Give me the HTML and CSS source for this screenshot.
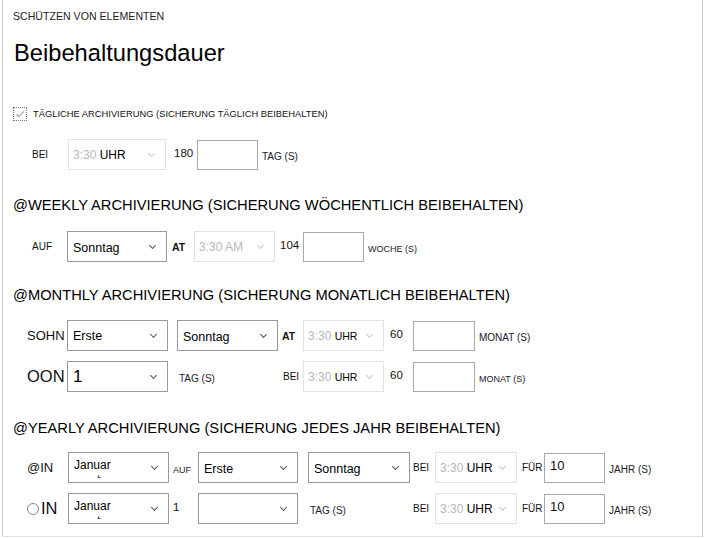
FILE: index.html
```html
<!DOCTYPE html>
<html lang="de">
<head>
<meta charset="utf-8">
<title>Beibehaltungsdauer</title>
<link rel="stylesheet" href="styles.css">
</head>
<body>
<div class="frame">
  <div class="crumb">SCHÜTZEN VON ELEMENTEN</div>
  <h1 class="title">Beibehaltungsdauer</h1>

  <div class="check-row">
    <span class="checkbox"><svg viewBox="0 0 12 12" width="12" height="12"><path d="M2.5 6.2 L5 8.6 L9.8 3.4" fill="none" stroke="#a8a8a8" stroke-width="1.2"/></svg></span>
    <span class="check-label">TÄGLICHE ARCHIVIERUNG (SICHERUNG TÄGLICH BEIBEHALTEN)</span>
  </div>

  <div class="row daily">
    <span class="lbl sm c-bei">BEI</span>
    <div class="sel dis w98"><span class="v"><span class="g">3:30</span> UHR</span><i class="chev"></i></div>
    <span class="num c-180">180</span>
    <div class="inp w61"></div>
    <span class="unit ml4">TAG (S)</span>
  </div>

  <h2 class="section s-weekly">@WEEKLY ARCHIVIERUNG (SICHERUNG WÖCHENTLICH BEIBEHALTEN)</h2>
  <div class="row weekly">
    <span class="lbl sm c-auf">AUF</span>
    <div class="sel w100"><span class="v low">Sonntag</span><i class="chev"></i></div>
    <span class="lbl bold c-at">AT</span>
    <div class="sel dis w81"><span class="v g">3:30 AM</span><i class="chev"></i></div>
    <span class="num c-104">104</span>
    <div class="inp w61"></div>
    <span class="unit tiny ml4">WOCHE (S)</span>
  </div>

  <h2 class="section s-monthly">@MONTHLY ARCHIVIERUNG (SICHERUNG MONATLICH BEIBEHALTEN)</h2>
  <div class="grid monthly">
    <span class="lbl md">SOHN</span>
    <div class="sel w101"><span class="v">Erste</span><i class="chev"></i></div>
    <span></span>
    <div class="sel w101"><span class="v low">Sonntag</span><i class="chev"></i></div>
    <span class="lbl bold pad4">AT</span>
    <div class="sel dis w81"><span class="v"><span class="g">3:30</span> <span class="sm-in">UHR</span></span><i class="chev"></i></div>
    <span class="num pad6">60</span>
    <div class="inp w62"></div>
    <span class="unit pad4">MONAT (S)</span>

    <span class="lbl lg">OON</span>
    <div class="sel w101"><span class="v big">1</span><i class="chev"></i></div>
    <span></span>
    <span class="unit pad2">TAG (S)</span>
    <span class="lbl sm pad5">BEI</span>
    <div class="sel dis w81"><span class="v"><span class="g">3:30</span> <span class="sm-in">UHR</span></span><i class="chev"></i></div>
    <span class="num pad6">60</span>
    <div class="inp w62"></div>
    <span class="unit tiny pad4">MONAT (S)</span>
  </div>

  <h2 class="section s-yearly">@YEARLY ARCHIVIERUNG (SICHERUNG JEDES JAHR BEIBEHALTEN)</h2>
  <div class="grid yearly">
    <span class="lbl md">@IN</span>
    <div class="sel w101"><span class="v top sm12">Januar<i class="tick"></i></span><i class="chev"></i></div>
    <span class="unit tiny pad4">AUF</span>
    <div class="sel w100"><span class="v low">Erste</span><i class="chev"></i></div>
    <div class="cell-pad10"><div class="sel w102"><span class="v low">Sonntag</span><i class="chev"></i></div></div>
    <span class="lbl sm">BEI</span>
    <div class="sel dis w82"><span class="v"><span class="g">3:30</span> UHR</span><i class="chev"></i></div>
    <span class="lbl sm pad5">FÜR</span>
    <div class="inp w61"><span class="val">10</span></div>
    <span class="unit pad4">JAHR (S)</span>

    <span class="lbl radio-lbl"><span class="radio"></span><span class="lg">IN</span></span>
    <div class="sel w101"><span class="v top sm12">Januar<i class="tick"></i></span><i class="chev"></i></div>
    <span class="num pad4">1</span>
    <div class="sel w100"><span class="v"></span><i class="chev"></i></div>
    <span class="unit pad12">TAG (S)</span>
    <span class="lbl sm">BEI</span>
    <div class="sel dis w82"><span class="v"><span class="g">3:30</span> UHR</span><i class="chev"></i></div>
    <span class="lbl sm pad5">FÜR</span>
    <div class="inp w61"><span class="val">10</span></div>
    <span class="unit pad4">JAHR (S)</span>
  </div>
</div>
</body>
</html>
```

FILE: styles.css
```css
* { box-sizing: border-box; }
html, body { margin: 0; padding: 0; background: #fff; }
body {
  font-family: "Liberation Sans", Arial, sans-serif;
  color: #111;
}
.frame {
  margin-left: 2px;
  width: 701px;
  height: 537px;
  border-left: 1px solid #c8c8c8;
  border-right: 1px solid #c8c8c8;
  border-bottom: 1px solid #e0e0e0;
  padding: 8px 0 0 10px;
  display: flex;
  flex-direction: column;
  align-items: flex-start;
}
.crumb {
  font-size: 10.6px;
  line-height: 16px;
  color: #222;
}
.title {
  margin: 15px 0 0 1px;
  font-size: 23.7px;
  line-height: 29px;
  font-weight: normal;
  color: #000;
}
.check-row {
  margin-top: 39px;
  display: flex;
  align-items: center;
  height: 14px;
}
.checkbox {
  width: 14px;
  height: 14px;
  border: 1px dotted #777;
  display: flex;
  align-items: center;
  justify-content: center;
}
.check-label {
  margin-left: 6px;
  font-size: 9.35px;
  color: #111;
}
.row {
  display: flex;
  align-items: center;
  height: 31px;
}
.daily { margin-top: 18px; padding-left: 19px; }
.weekly { margin-top: 17px; padding-left: 19px; }
.section {
  margin: 0;
  font-size: 14.7px;
  line-height: 18px;
  font-weight: normal;
  color: #000;
}
.s-weekly { margin-top: 26px; }
.s-monthly { margin-top: 24px; }
.s-yearly { margin-top: 27px; }

.grid {
  display: grid;
  align-items: center;
  padding-left: 14px;
}
.monthly {
  margin-top: 16px;
  grid-template-columns: 40px 101px 9px 101px 25px 81px 29px 62px auto;
  grid-auto-rows: 31px;
  row-gap: 10px;
}
.yearly {
  margin-top: 15px;
  grid-template-columns: 41px 101px 29px 100px 115px 22px 82px 27px 61px auto;
  grid-auto-rows: 31px;
  row-gap: 10px;
}

.lbl { white-space: nowrap; }
.sm { font-size: 10px; }
.md { font-size: 13px; }
.lg { font-size: 16.5px; }
.bold { font-size: 10.5px; font-weight: bold; }
.num { font-size: 11.5px; margin-top: -4px; }
.unit { font-size: 10px; margin-top: 4px; white-space: nowrap; color: #1a1a2a; }
.unit.tiny { font-size: 9px; }
.ml4 { margin-left: 4px; }

.c-bei { width: 36px; }
.c-auf { width: 35px; }
.c-at { width: 27px; padding-left: 5px; }
.c-180 { width: 31px; padding-left: 8px; }
.c-104 { width: 28px; padding-left: 5px; }
.pad2 { padding-left: 2px; }
.pad4 { padding-left: 4px; }
.pad5 { padding-left: 5px; }
.pad6 { padding-left: 6px; }
.pad12 { padding-left: 12px; }
.cell-pad10 { padding-left: 10px; }

.sel {
  position: relative;
  height: 31px;
  border: 1px solid #9a9a9a;
  background: #fff;
  display: flex;
  align-items: center;
  padding-left: 5px;
  font-size: 12.5px;
  color: #000;
}
.sel.dis { border-color: #e2e2e2; padding-left: 4px; font-size: 12px; }
.w98 { width: 98px; }
.w100 { width: 100px; }
.w101 { width: 101px; }
.w102 { width: 102px; }
.w81 { width: 81px; }
.w82 { width: 82px; }
.w61 { width: 61px; }
.w62 { width: 62px; }
.v { white-space: nowrap; position: relative; }
.v.low { margin-top: 3px; }
.v.top { margin-top: -6px; }
.v.big { font-size: 17px; }
.sm12 { font-size: 12px; }
.g { color: #b8b8b8; }
.sm-in { font-size: 10.5px; }
.chev {
  position: absolute;
  right: 11px;
  top: 11px;
  width: 5px;
  height: 5px;
  border-right: 1.2px solid #555;
  border-bottom: 1.2px solid #555;
  transform: rotate(45deg);
}
.dis .chev { border-color: #c8c8c8; }
.tick {
  position: absolute;
  left: 24px;
  bottom: -6px;
  width: 3px;
  height: 3px;
  border-left: 1px solid #555;
  border-bottom: 1px solid #555;
  transform: skewX(-20deg);
}
.inp {
  height: 30px;
  border: 1px solid #a8a8a8;
  display: flex;
  align-items: center;
  padding-left: 5px;
}
.val { font-size: 13px; margin-top: -4px; }
.radio-lbl { display: flex; align-items: center; }
.radio {
  width: 12px;
  height: 12px;
  border: 1px solid #888;
  border-radius: 50%;
  margin-right: 2px;
}
```
